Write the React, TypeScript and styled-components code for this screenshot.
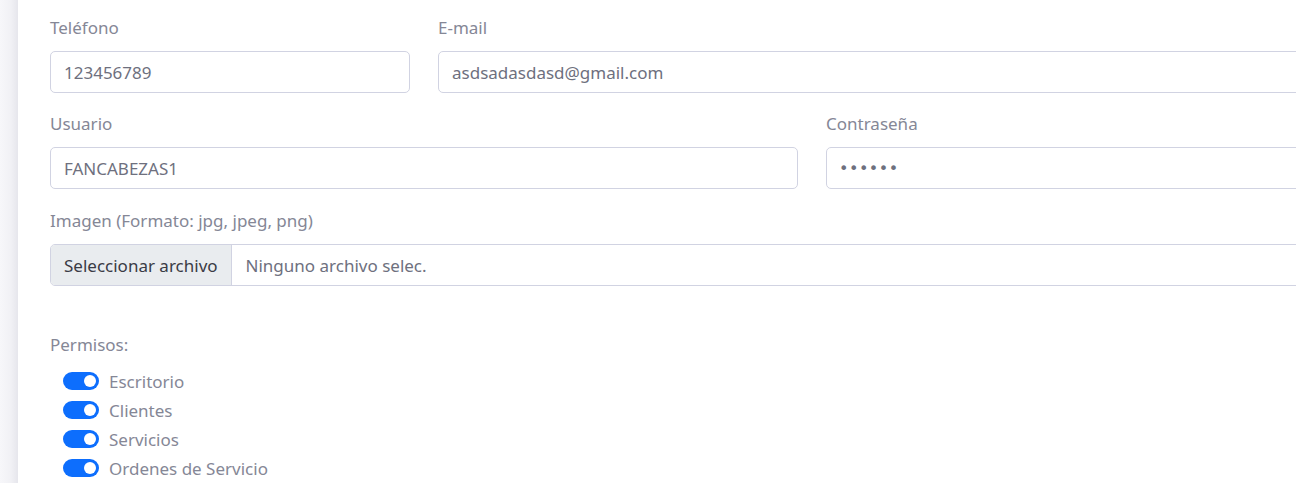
import React from "react";
import styled, { createGlobalStyle } from "styled-components";

const Global = createGlobalStyle`
  html, body { margin: 0; padding: 0; background: #fff; overflow: hidden; }
  body { font-family: "Noto Sans", "Open Sans", sans-serif; }
`;

const Page = styled.div`
  display: flex;
  width: 1296px;
  height: 483px;
  overflow: hidden;
`;

const SideShade = styled.div`
  flex: 0 0 18px;
  background: linear-gradient(to right, #f7f7fa 0%, #f1f1f5 60%, #e6e6ec 100%);
`;

const Card = styled.div`
  flex: 0 0 auto;
  background: #fff;
  padding: 16px 0 0 32px;
`;

const Row = styled.div<{ $mb?: number }>`
  display: grid;
  grid-template-columns: repeat(12, 1fr);
  column-gap: 28px;
  width: 1524px;
  margin-bottom: ${(p) => p.$mb ?? 19}px;
`;

const Field = styled.div<{ $span: number }>`
  grid-column: span ${(p) => p.$span};
  display: flex;
  flex-direction: column;
`;

const Label = styled.label`
  font-size: 17px;
  line-height: 24px;
  color: #858796;
  margin-bottom: 11px;
`;

const Input = styled.input`
  box-sizing: border-box;
  height: 42px;
  border: 1px solid #d1d3e2;
  border-radius: 5px;
  padding: 0 13px;
  font-family: inherit;
  font-size: 17px;
  color: #6e707e;
  background: #fff;
  outline: none;
  &[type="password"] { font-family: "DejaVu Sans", sans-serif; font-size: 16px; letter-spacing: 0.5px; padding-left: 12px; }
`;

const FileBox = styled.div`
  box-sizing: border-box;
  height: 42px;
  display: flex;
  align-items: stretch;
  border: 1px solid #d1d3e2;
  border-radius: 5px;
  overflow: hidden;
  font-size: 17px;
`;

const FileButton = styled.div`
  display: flex;
  align-items: center;
  padding: 0 13px;
  background: #e9ecef;
  color: #3a3b45;
  border-right: 1px solid #d1d3e2;
`;

const FileName = styled.div`
  display: flex;
  align-items: center;
  padding: 0 14px;
  color: #6e707e;
`;

const PermTitle = styled.div`
  font-size: 17px;
  line-height: 24px;
  color: #858796;
  margin-bottom: 12px;
`;

const PermList = styled.div`
  display: flex;
  flex-direction: column;
  gap: 5px;
  padding-left: 13px;
`;

const PermItem = styled.div`
  display: flex;
  align-items: center;
  height: 24px;
  gap: 10px;
  font-size: 17px;
  color: #858796;
`;

const Switch = styled.span<{ $on: boolean }>`
  position: relative;
  width: 36px;
  height: 18px;
  border-radius: 9px;
  background: ${(p) => (p.$on ? "#0d6efd" : "#fff")};
  flex: 0 0 auto;
  &::after {
    content: "";
    position: absolute;
    top: 3px;
    left: ${(p) => (p.$on ? "21px" : "3px")};
    width: 12px;
    height: 12px;
    border-radius: 50%;
    background: #fff;
  }
`;

const perms = ["Escritorio", "Clientes", "Servicios", "Ordenes de Servicio"];

export default function App() {
  return (
    <Page>
      <Global />
      <SideShade />
      <Card>
        <Row>
          <Field $span={3}>
            <Label>Teléfono</Label>
            <Input readOnly value="123456789" />
          </Field>
          <Field $span={9}>
            <Label>E-mail</Label>
            <Input readOnly value="asdsadasdasd@gmail.com" />
          </Field>
        </Row>
        <Row $mb={20}>
          <Field $span={6}>
            <Label>Usuario</Label>
            <Input readOnly value="FANCABEZAS1" />
          </Field>
          <Field $span={6}>
            <Label>Contraseña</Label>
            <Input readOnly type="password" value="123456" />
          </Field>
        </Row>
        <Row $mb={47}>
          <Field $span={12}>
            <Label>Imagen (Formato: jpg, jpeg, png)</Label>
            <FileBox>
              <FileButton>Seleccionar archivo</FileButton>
              <FileName>Ninguno archivo selec.</FileName>
            </FileBox>
          </Field>
        </Row>
        <PermTitle>Permisos:</PermTitle>
        <PermList>
          {perms.map((p) => (
            <PermItem key={p}>
              <Switch $on />
              <span>{p}</span>
            </PermItem>
          ))}
        </PermList>
      </Card>
    </Page>
  );
}
